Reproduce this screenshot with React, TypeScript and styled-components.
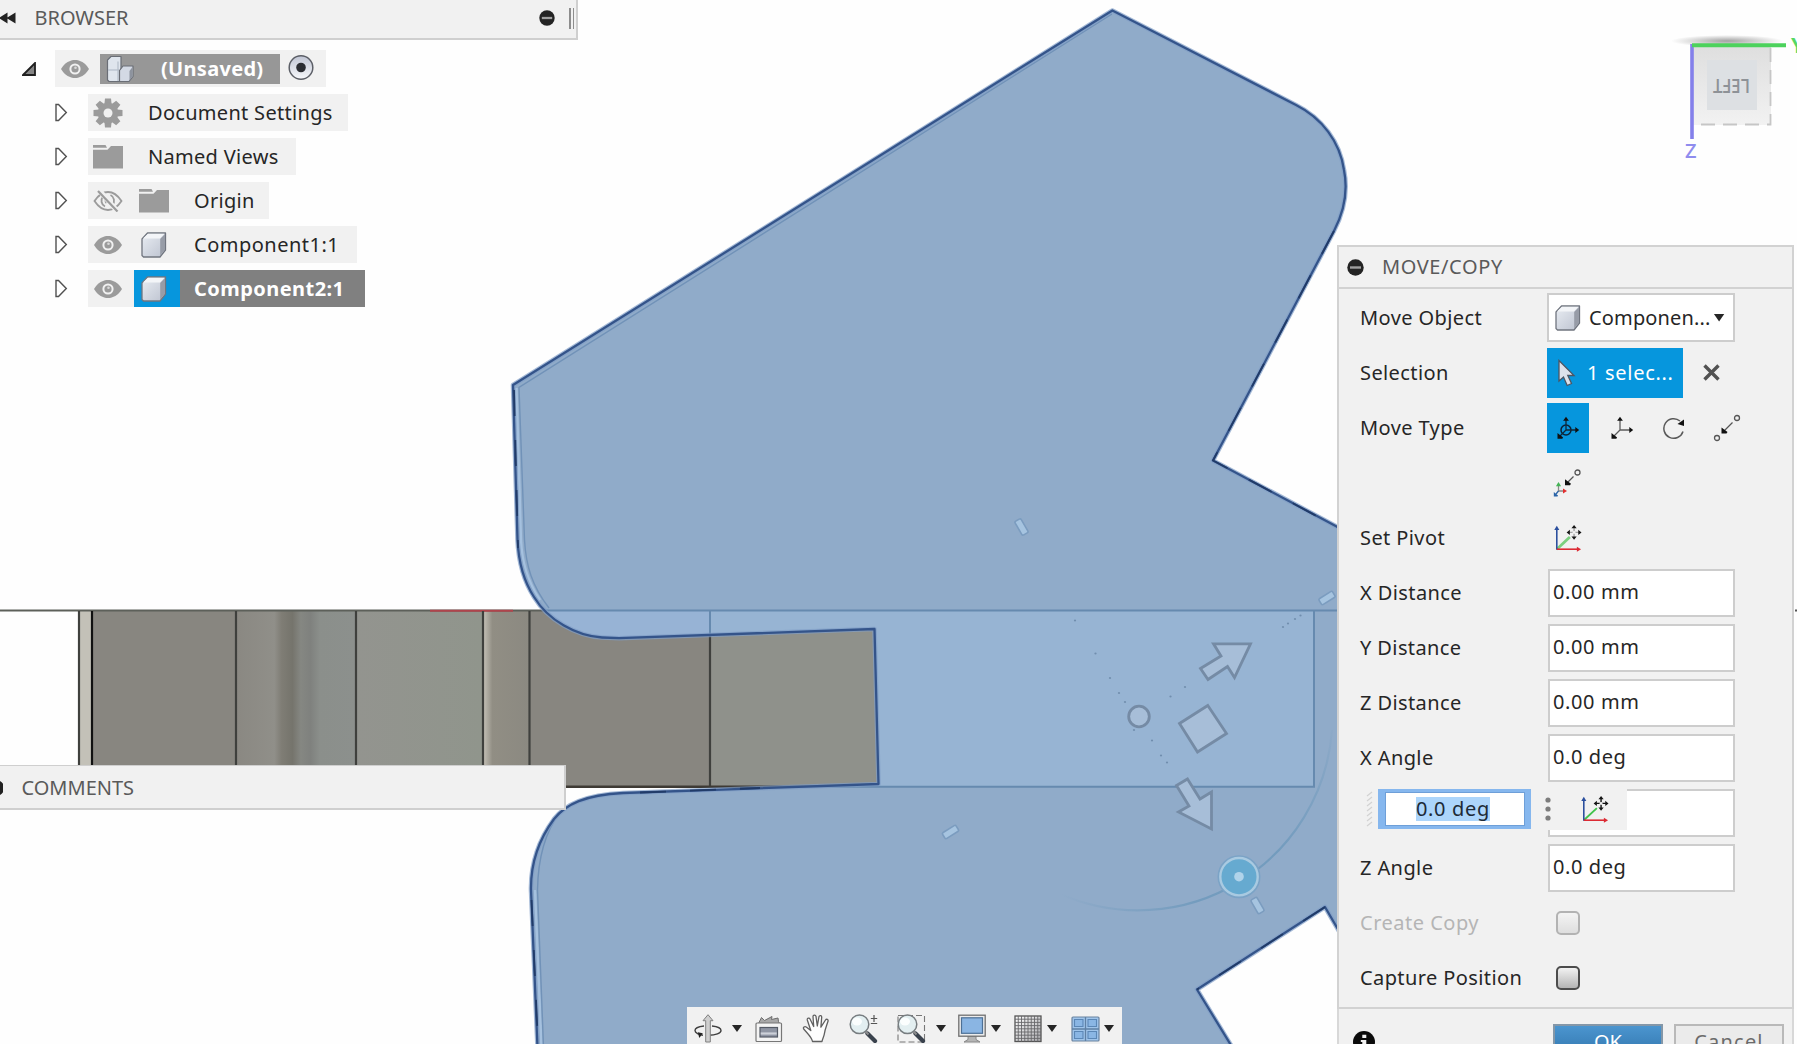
import React from 'react';
import styled, { createGlobalStyle, css } from 'styled-components';

const Global = createGlobalStyle`
  *, *::before, *::after { box-sizing: border-box; }
  html, body { margin: 0; padding: 0; overflow: hidden; background: #fefefe; }
  svg { display: block; flex: none; }
`;

const Workspace = styled.div`
  position: relative;
  width: 1797px;
  height: 1044px;
  overflow: hidden;
  background: #fefefe;
  color: #262626;
  font-family: 'Noto Sans', 'Open Sans', sans-serif;
  font-size: 20px;
  line-height: 26px;
  white-space: nowrap;
`;

const Canvas = styled.svg`
  width: 1797px;
  height: 1044px;
`;

/* Palettes float above the model canvas */
const Palette = styled.section<{ $x: number; $y: number; $w: number }>`
  position: absolute;
  left: ${p => p.$x}px;
  top: ${p => p.$y}px;
  width: ${p => p.$w}px;
`;

const Text = styled.span<{ $ls?: number; $ml?: number; $color?: string }>`
  margin-left: ${p => p.$ml ?? 0}px;
  letter-spacing: ${p => p.$ls ?? 0}px;
  ${p => p.$color && css`color: ${p.$color};`}
`;

/* ---------- browser ---------- */
const BrowserHeader = styled.header`
  display: flex;
  align-items: center;
  height: 40px;
  padding: 0 2px 2px 0;
  background: #f1f1f1;
  border-right: 2px solid #cfcfcf;
  border-bottom: 2px solid #cfcfcf;
`;
const HeaderTitle = styled.h2<{ $ml: number; $ls: number }>`
  flex: 1;
  margin: 0 0 0 ${p => p.$ml}px;
  font-size: 20px;
  font-weight: 400;
  letter-spacing: ${p => p.$ls}px;
  color: #5a5a5a;
`;
const Grip = styled.i`
  width: 5px;
  height: 21px;
  margin-left: 14px;
  border: solid #8d8d8d;
  border-width: 0 1px 0 2px;
`;
const Tree = styled.ul`
  display: grid;
  row-gap: 7px;
  margin: 0;
  padding: 10px 0 0;
  list-style: none;
`;
const TreeRow = styled.li<{ $indent: number }>`
  display: flex;
  align-items: center;
  height: 37px;
  padding-left: ${p => p.$indent}px;
`;
const Node = styled.div<{ $ml: number; $w: number }>`
  display: flex;
  align-items: center;
  width: ${p => p.$w}px;
  height: 37px;
  margin-left: ${p => p.$ml}px;
  background: #f1f1f1;
`;
const Slot = styled.span<{ $w: number; $bg?: string; $pr?: number }>`
  display: flex;
  align-items: center;
  justify-content: center;
  width: ${p => p.$w}px;
  height: 100%;
  padding-right: ${p => p.$pr ?? 0}px;
  background: ${p => p.$bg ?? 'transparent'};
`;
const NodeName = styled.span<{ $pad: number; $bg?: string; $ls?: number; $bold?: boolean }>`
  display: flex;
  flex: 1;
  align-items: center;
  height: 100%;
  padding-left: ${p => p.$pad}px;
  background: ${p => p.$bg ?? 'transparent'};
  letter-spacing: ${p => p.$ls ?? 0}px;
  color: ${p => (p.$bold ? '#fff' : '#262626')};
  font-weight: ${p => (p.$bold ? 700 : 400)};
`;
const RootBadge = styled.span`
  display: flex;
  align-items: center;
  width: 180px;
  height: 30px;
  padding-left: 6px;
  gap: 27px;
  background: #979797;
  color: #fff;
  font-weight: 700;
  letter-spacing: 0.3px;
`;

/* ---------- comments ---------- */
const CommentsBar = styled.header`
  display: flex;
  align-items: center;
  height: 45px;
  padding-top: 1px;
  background: #f1f1f1;
  border: solid #cfcfcf;
  border-width: 1px 2px 2px 0;
`;

/* ---------- move / copy dialog ---------- */
const DialogHeader = styled.header`
  display: flex;
  align-items: center;
  height: 44px;
  padding-left: 8px;
  border: 2px solid #d2d2d2;
  background: #f1f1f1;
`;
const Form = styled.div`
  display: grid;
  grid-auto-rows: 55px;
  height: 720px;
  padding: 1px 0 0 21px;
  border: solid #d2d2d2;
  border-width: 0 2px 2px 2px;
  background: #f1f1f1;
`;
const Field = styled.div<{ $off?: boolean }>`
  display: grid;
  grid-template-columns: 187px 1fr;
  align-items: center;
  color: ${p => (p.$off ? '#b5b5b5' : '#262626')};
`;
const Controls = styled.div<{ $pl?: number }>`
  display: flex;
  align-items: center;
  padding-left: ${p => p.$pl ?? 0}px;
`;
const Combo = styled.div`
  display: flex;
  align-items: center;
  width: 188px;
  height: 49px;
  padding-left: 6px;
  border: 2px solid #cdcdcd;
  background: #fff;
`;
const ValueBox = styled.div`
  display: flex;
  align-items: center;
  width: 187px;
  height: 48px;
  margin-left: 1px;
  padding: 0 0 1px 3px;
  border: 2px solid #cdcdcd;
  background: #fff;
`;
const SelectionButton = styled.div`
  display: flex;
  align-items: center;
  width: 136px;
  height: 50px;
  padding-left: 10px;
  background: #0696dd;
  color: #fff;
`;
const IconCell = styled.span<{ $on?: boolean; $w: number }>`
  display: flex;
  align-items: center;
  justify-content: center;
  width: ${p => p.$w}px;
  height: 50px;
  background: ${p => (p.$on ? '#0696dd' : 'transparent')};
`;
const Check = styled.i<{ $off?: boolean }>`
  width: 24px;
  height: 24px;
  border: 2px solid ${p => (p.$off ? '#b3b3b3' : '#4c4c4c')};
  border-radius: 5px;
  background: ${p => (p.$off ? 'linear-gradient(#f4f4f4,#dedede)' : 'linear-gradient(#f2f2f2,#b4b4b4)')};
`;
const Footer = styled.footer`
  display: flex;
  align-items: flex-start;
  height: 60px;
  padding: 15px 0 0 14px;
  border: solid #d8d8d8;
  border-width: 0 2px;
  background: #f1f1f1;
`;
const Button = styled.div<{ $primary?: boolean }>`
  display: flex;
  justify-content: center;
  width: 110px;
  height: 44px;
  padding-top: 3px;
  border: 2px solid ${p => (p.$primary ? '#8497a8' : '#b9b9b9')};
  background: ${p => (p.$primary ? 'linear-gradient(#4b95cf,#2a6ca3)' : '#ebebeb')};
  color: ${p => (p.$primary ? '#fff' : '#6b6b6b')};
`;
const FooterIcon = styled.span`
  width: 200px;
  padding-top: 7px;
`;
const FooterButtons = styled.div`
  display: flex;
  gap: 11px;
`;

/* ---------- floating angle input ---------- */
const FloatInput = styled.div`
  position: absolute;
  left: 1366px;
  top: 789px;
  display: flex;
  align-items: center;
  height: 40px;
`;
const FocusRing = styled.div`
  display: flex;
  align-items: center;
  justify-content: center;
  width: 153px;
  height: 40px;
  margin-left: 4px;
  padding-right: 4px;
  border: solid #86b7ee;
  border-width: 3px 6px 3px 7px;
  background: #fff;
  box-shadow: inset 0 0 0 1px #6e9fd8;
`;
const Selected = styled.span`
  height: 24px;
  background: #acd5fb;
  line-height: 23px;
  letter-spacing: 0.7px;
  color: #1d2a36;
`;
const FloatTools = styled.div`
  display: flex;
  align-items: center;
  width: 82px;
  height: 41px;
  margin-left: 14px;
  padding-bottom: 1px;
  gap: 30px;
  background: linear-gradient(90deg, #f1f1f1, #f1f1f1);
`;

/* ---------- navigation bar ---------- */
const NavBar = styled.nav`
  position: absolute;
  left: 687px;
  top: 1007px;
  display: flex;
  align-items: flex-start;
  width: 435px;
  height: 40px;
  padding: 7px 0 0 7px;
  background: #f1f1f1;
`;
const NavItem = styled.span<{ $ml: number }>`
  display: flex;
  align-items: center;
  width: 28px;
  height: 29px;
  margin-left: ${p => p.$ml}px;
`;
const NavArrow = styled.i<{ $ml: number }>`
  width: 10px;
  height: 7px;
  margin: 11px 0 0 ${p => p.$ml}px;
  background: #262626;
  clip-path: polygon(0 0, 100% 0, 50% 100%);
`;
const ComboArrow = styled(NavArrow)`
  margin-top: 0;
  height: 8px;
  width: 11px;
`;

/* ---------- icons ---------- */
const Minus = ({ s = 17 }: { s?: number }) => (
  <svg width={s} height={s} viewBox="0 0 17 17">
    <circle cx="8.5" cy="8.5" r="8.2" fill="#242424" />
    <rect x="3" y="7.3" width="11" height="2.4" fill="#a0a0a0" />
  </svg>
);
const Eye = () => (
  <svg width="30" height="20" viewBox="0 0 30 20">
    <path d="M1 10C5 3.5 10 1 15 1s10 2.500 14 9c-4 6.500-9 9-14 9S5 16.500 1 10z" fill="#9b9b9b" />
    <circle cx="15" cy="10" r="5.600" fill="#f1f1f1" />
    <circle cx="15" cy="10" r="3.600" fill="#9b9b9b" />
    <circle cx="15.500" cy="8.800" r="1.300" fill="#d8d8d8" />
  </svg>
);
const EyeOff = () => (
  <svg width="30" height="22" viewBox="0 0 30 22" fill="none" stroke="#9b9b9b" strokeWidth="1.800">
    <path d="M1.500 11C5.500 5 10 2 15 2s9.500 3 13.500 9c-4 6-8.500 9-13.500 9S5.500 17 1.500 11z" />
    <path d="M10 6.500a6.500 6.500 0 0 0 2 10M17.500 5a6.500 6.500 0 0 1 2 10M13.500 8.500a3 3 0 0 0 0 4.500" />
    <path d="M6 0l19 22" stroke="#f1f1f1" strokeWidth="5" />
    <path d="M5 1l19.500 20.500" strokeWidth="2.200" />
  </svg>
);
const Gear = () => (
  <svg width="30" height="30" viewBox="-15 -15 30 30">
    {[0, 45, 90, 135].map(a => (
      <path key={a} d="M-3.600-9L-3-14.500H3L3.600-9V9L3 14.500H-3L-3.600 9z" fill="#9b9b9b" transform={`rotate(${a})`} />
    ))}
    <circle r="10.300" fill="#9b9b9b" />
    <circle r="4.500" fill="#f1f1f1" />
  </svg>
);
const Folder = () => (
  <svg width="30" height="25" viewBox="0 0 30 25" fill="#9b9b9b">
    <path d="M0 1h12.500l1.500 2.800H0z" />
    <path d="M0 5.800h14.500L18 2H30v22.500H0z" />
  </svg>
);
const Cube = () => (
  <svg width="26" height="26" viewBox="0 0 26 26">
    <defs>
      <linearGradient id="cubeFace" x1="0" y1="0" x2="1" y2="1">
        <stop offset="0" stopColor="#e9edf3" />
        <stop offset="1" stopColor="#bcc2cf" />
      </linearGradient>
    </defs>
    <path d="M1 7L6.500 1h18v17L19 25H2.500L1 23.500z" fill="url(#cubeFace)" stroke="#70757f" strokeWidth="1.300" strokeLinejoin="round" />
    <path d="M2 6.500L7 1.800h16.500L19 6.500z" fill="#f3f5f8" />
    <path d="M19.200 7l4.800-5v15.500l-4.800 6z" fill="#979ca7" />
  </svg>
);
const Assembly = () => (
  <svg width="28" height="28" viewBox="0 0 28 28" stroke="#6a6e76" strokeWidth="1.200" strokeLinejoin="round">
    <path d="M1.500 5L5 1.500h10V26.500H3L1.500 25z" fill="#dfe5ed" />
    <path d="M2 15h11" fill="none" stroke="#b4bcc9" />
    <path d="M12 6.500V26" fill="none" stroke="#b4bcc9" />
    <path d="M13.500 15.500L17 11h10v10.500L23 26.500H13.500z" fill="#d3d9e4" />
    <path d="M23.500 16L26.500 12v9.500l-3 4z" fill="#8d939e" stroke="none" />
  </svg>
);
const RadioDot = () => (
  <svg width="26" height="29" viewBox="0 0 26 29">
    <defs>
      <linearGradient id="radioFill" x1="0" y1="0" x2="0" y2="1">
        <stop offset="0" stopColor="#c0c5d4" />
        <stop offset="1" stopColor="#f7f8fb" />
      </linearGradient>
    </defs>
    <circle cx="13" cy="13.500" r="11.800" fill="url(#radioFill)" stroke="#5c5f67" strokeWidth="1.500" />
    <circle cx="13" cy="13.500" r="4.800" fill="#2b2d33" />
  </svg>
);
const Collapsed = () => (
  <svg width="13" height="19" viewBox="0 0 13 19">
    <path d="M1 1.500h2.500L11.300 9.500 3.500 17.500H1z" fill="#fff" stroke="#515151" strokeWidth="1.400" />
  </svg>
);
const Expanded = () => (
  <svg width="14" height="14" viewBox="0 0 14 14">
    <path d="M1 13L13 1v12z" fill="#858585" stroke="#202020" strokeWidth="1.800" />
  </svg>
);
const Rewind = () => (
  <svg width="16" height="12" viewBox="0 0 16 12" fill="#222">
    <path d="M-1 6L7.500.5v11zM6.500 6L15.500.5v11z" />
  </svg>
);
const Cursor = () => (
  <svg width="20" height="28" viewBox="0 0 20 28">
    <path d="M2 1.500V22l4.500-4 3.700 8.500 4.300-2L10.800 16.500H17z" fill="#dde1ea" stroke="#4d5563" strokeWidth="1.300" />
  </svg>
);
const Clear = () => (
  <svg width="17" height="17" viewBox="0 0 17 17" stroke="#525252" strokeWidth="3.400">
    <path d="M1.500 1.500l14 14M15.500 1.500l-14 14" />
  </svg>
);
const Triad = ({ ring }: { ring?: boolean }) => (
  <svg width="24" height="24" viewBox="0 0 24 24">
    {ring && <circle cx="10" cy="14" r="5" fill="none" stroke="#0b2337" strokeWidth="1.500" />}
    <path d="M10 3v11h10M10 14l-6 6" fill="none" stroke={ring ? '#10283a' : '#5c5c5c'} strokeWidth="1.300" />
    <path d="M10 .800l2.900 3.900H7.100zM23.200 14L19.300 11.100v5.800zM1.500 22.800V17l5.600 4.500-.800 1.300z" fill="#111" />
  </svg>
);
const Rotate = () => (
  <svg width="24" height="24" viewBox="0 0 24 24">
    <path d="M18 5A9.800 9.800 0 1 0 21 15.500" fill="none" stroke="#5a5a5a" strokeWidth="1.500" />
    <path d="M22 3.500v6.500L15.500 8z" fill="#111" />
  </svg>
);
const PointToPoint = () => (
  <svg width="28" height="28" viewBox="0 0 28 28">
    <circle cx="24" cy="4" r="2.500" fill="none" stroke="#555" strokeWidth="1.300" />
    <circle cx="4" cy="24" r="2.500" fill="none" stroke="#555" strokeWidth="1.300" />
    <path d="M19.500 8.500L11 17" stroke="#555" strokeWidth="1.300" />
    <path d="M8.500 19.500V13.500l6 4.500-1 1.500z" fill="#111" />
  </svg>
);
const PointToPosition = () => (
  <svg width="28" height="28" viewBox="0 0 28 28">
    <circle cx="24.500" cy="3.500" r="2.500" fill="none" stroke="#555" strokeWidth="1.300" />
    <path d="M20.500 7.500L14 14" stroke="#555" strokeWidth="1.300" />
    <path d="M12 16.300V10.300l6 4.500-1 1.500z" fill="#111" />
    <path d="M5.500 15v7H10" fill="none" stroke="#888" strokeWidth="1.300" />
    <path d="M5.500 13l2.600 4.200H2.900z" fill="#43b455" />
    <path d="M14 22l-4-2.400v4.800z" fill="#e22e2e" />
    <path d="M5.500 22L3 25" stroke="#2a64a8" strokeWidth="1.300" />
    <path d="M.800 27.500v-4.500l4.200 3.500-.500 1z" fill="#2a64a8" />
  </svg>
);
const Pivot = ({ strong }: { strong?: boolean }) => (
  <svg width="28" height="28" viewBox="0 0 30 30">
    <path d="M3 27L17 14" stroke={strong ? '#41c34b' : '#7bd07f'} strokeWidth={strong ? 2 : 3} />
    <path d="M3 27.500V5" stroke="#2b4f9e" strokeWidth="1.700" />
    <path d="M3 2l2.700 4.500H.3z" fill="#2b4f9e" />
    <path d="M3 27h22" stroke="#dc2a33" strokeWidth="1.700" />
    <path d="M29 27l-4.500-2.700v5.400z" fill="#dc2a33" />
    <path d="M21.500 3v12M15.500 9h12" stroke={strong ? '#111' : '#a5a5a5'} strokeWidth="1.500" />
    <path d="M21.500 1l2.800 3.500h-5.600zM21.500 17l2.800-3.500h-5.600zM13.500 9l3.500-2.800v5.600zM29.500 9l-3.500-2.800v5.600z" fill="#161616" />
    <circle cx="21.500" cy="9" r="1.600" fill="#f1f1f1" />
  </svg>
);
const GripDots = () => (
  <svg width="8" height="38" viewBox="0 0 8 38" stroke="#d2d2d2" strokeWidth="1.300">
    {[2, 7, 12, 17, 22, 27, 32].map(y => <path key={y} d={`M1 ${y + 4}l5-4`} />)}
  </svg>
);
const MoreDots = () => (
  <svg width="6" height="26" viewBox="0 0 6 26" fill="#7d7d7d">
    <circle cx="3" cy="4" r="2.600" /><circle cx="3" cy="13" r="2.600" /><circle cx="3" cy="22" r="2.600" />
  </svg>
);
const Info = () => (
  <svg width="22" height="22" viewBox="0 0 22 22">
    <circle cx="11" cy="11" r="11" fill="#0b0b0b" />
    <path d="M9.300 3.800h4v3.200h-4zM7.800 9h5.500v8h1.500v1.800H7.500V17h1.800v-6H7.800z" fill="#f1f1f1" />
  </svg>
);
const Orbit = () => (
  <svg width="28" height="29" viewBox="0 0 28 29">
    <path d="M10 12c-6 .600-9 2.400-9 4.600 0 2.400 4 4.200 8 4.600M18 12c5.500.600 9 2.200 9 4.400 0 2.600-5.500 4.800-12 4.800" fill="none" stroke="#3f3f3f" strokeWidth="1.400" />
    <path d="M14 .700l5 6h-2.700V28h-4.600V6.700H9z" fill="#cfcfcf" stroke="#808080" strokeWidth="1" />
    <path d="M3.800 18.200l5 1-3.500 4.800z" fill="#222" />
  </svg>
);
const LookAt = () => (
  <svg width="28" height="29" viewBox="0 0 28 29">
    <path d="M3.500 9.500L6.500 3.500l3 3L17 2.500l-.500 3 6.500-1.500.500 3.500 1 2z" fill="#a8a8a8" stroke="#6c6c6c" strokeWidth="1" />
    <rect x="1" y="9" width="25.500" height="18.500" rx="1" fill="#f4f4f4" stroke="#777" strokeWidth="1.200" />
    <rect x="5" y="13.500" width="17.500" height="9.500" fill="#8f95a3" stroke="#555b66" strokeWidth="1.200" />
    <path d="M5.700 19.500h16" stroke="#cdd1d9" strokeWidth="2.200" />
  </svg>
);
const Hand = () => (
  <svg width="29" height="29" viewBox="0 0 29 29">
    <path d="M10.500 27.500c-.500-4-4.500-7.500-8.800-12.500-1-1.500 1-3 2.500-2l4.600 3.500L5.300 6c-.400-1.800 1.900-2.600 2.700-1l3.700 7.500L11 2.500c0-1.800 2.600-2 3-.200l1.300 9.700L17 2.700c.400-1.700 2.800-1.400 2.700.400l-.800 10L23.500 6c1-1.500 3-.500 2.500 1.200-1.200 4-3 8-3.500 12-.400 3.300-2 5.300-2.500 8.300z" fill="#fdfdfd" stroke="#606060" strokeWidth="1.300" strokeLinejoin="round" />
  </svg>
);
const Lens = () => (
  <>
    <path d="M18.500 19.500l7.500 7.500" stroke="#3a424d" strokeWidth="4.300" strokeLinecap="round" />
    <path d="M16 17l3.500 3.500" stroke="#8d8d8d" strokeWidth="2" />
    <circle cx="10.500" cy="10.300" r="9.300" fill="#e3eff1" stroke="#777d80" strokeWidth="1.500" />
    <ellipse cx="8" cy="7.500" rx="5" ry="4" fill="#fbfefe" />
  </>
);
const Zoom = () => (
  <svg width="29" height="29" viewBox="0 0 29 29">
    <Lens />
    <path d="M25 1v7M21.800 4.500h6.400M21.800 9.500h6.400" stroke="#555" strokeWidth="1.200" />
  </svg>
);
const ZoomWindow = () => (
  <svg width="29" height="29" viewBox="0 0 29 29">
    <rect x="1" y="1.500" width="26.500" height="26.500" fill="none" stroke="#777" strokeWidth="1.100" strokeDasharray="6 3" />
    <Lens />
  </svg>
);
const Monitor = () => (
  <svg width="28" height="29" viewBox="0 0 28 29">
    <path d="M10 22h8v3.500l4 2.500H6l4-2.500z" fill="#b5b5b5" stroke="#888" />
    <rect x=".8" y="1.200" width="26.400" height="21" fill="#ececec" stroke="#707070" strokeWidth="1.300" />
    <rect x="3.500" y="3.800" width="21" height="15.500" fill="#8ab5e3" stroke="#4d7096" strokeWidth="1.200" />
  </svg>
);
const GridIcon = () => (
  <svg width="28" height="29" viewBox="0 0 28 29">
    <defs>
      <linearGradient id="gridFill" x1="0" y1="0" x2="1" y2="1">
        <stop offset="0" stopColor="#fff" />
        <stop offset="1" stopColor="#a8a8ac" />
      </linearGradient>
    </defs>
    <rect x="1" y="2" width="26" height="25.500" fill="url(#gridFill)" stroke="#555" strokeWidth="1.300" />
    {[1, 2, 3, 4, 5, 6, 7].map(i => (
      <path key={i} d={`M${1 + i * 3.25} 2v25.500M1 ${2 + i * 3.2}h26`} stroke="#66666a" strokeWidth=".9" />
    ))}
  </svg>
);
const Viewports = () => (
  <svg width="29" height="29" viewBox="0 0 29 29">
    <rect x="1" y="3" width="27" height="24" rx="1" fill="#9fc4ea" stroke="#6a83a0" strokeWidth="1.200" />
    <path d="M14.500 3v24M1 15h27" stroke="#5f80a4" strokeWidth="1.300" />
    <path d="M3.500 5.500h8.500v7H3.500zM17 5.500h8.500v7H17zM3.500 17.500h8.500v7H3.500zM17 17.500h8.500v7H17z" fill="#8ab6e4" stroke="#5b87b6" strokeWidth="1.100" />
  </svg>
);

/* ---------- model view ---------- */
const BODY =
  'M1360 610V539L1213 460.500L1334 231Q1350 200 1344 170C1340 142 1322 118 1296 105L1112.400 10.500L513 385L517.500 540C518.500 562 523 580 534 597C548 620 576 636 602 637.500L619 638.200L874.500 629L878.500 784L623 793C585 795 566 804 554 819C540 838 530.500 862 531 890L538 1060H1240L1197 989.500L1325 907L1350 950H1360z';
const edges = [79, 92, 236, 356, 483, 529.5, 710];
const handles: [number, number, number][] = [
  [1021.5, 527, -30], [950.5, 832, 58], [1327, 598, 58], [1257.5, 905.5, -30],
];
const specks: [number, number][] = [
  [1075, 620.5], [1095.5, 653.5], [1110, 678], [1119, 693], [1125, 702],
  [1170.5, 696.5], [1185, 687], [1152, 740.5], [1161, 755.5], [1167, 762.5],
  [1288, 623.5], [1300.5, 615.5], [1295, 619], [1283, 627], [1134, 730],
];

const Model = () => (
  <Canvas viewBox="0 0 1797 1044">
    <defs>
      <linearGradient id="bore" x1="0" x2="1" y1="0" y2="0">
        <stop offset="0" stopColor="#8a8882" /><stop offset=".32" stopColor="#908f89" />
        <stop offset=".38" stopColor="#7f7d75" /><stop offset=".47" stopColor="#75746c" />
        <stop offset=".54" stopColor="#858782" /><stop offset=".62" stopColor="#7f817e" />
        <stop offset=".70" stopColor="#8b8f8b" /><stop offset="1" stopColor="#8c908d" />
      </linearGradient>
      <linearGradient id="flat" x1="0" x2="1" y1="0" y2="0">
        <stop offset="0" stopColor="#93948f" /><stop offset="1" stopColor="#90958c" />
      </linearGradient>
      <linearGradient id="rim" x1="0" x2="1" y1="0" y2="0">
        <stop offset="0" stopColor="#c6c2b8" /><stop offset=".2" stopColor="#918e84" /><stop offset="1" stopColor="#8b8981" />
      </linearGradient>
      <linearGradient id="arcFade" gradientUnits="userSpaceOnUse" x1="1060" x2="1200" y1="0" y2="0">
        <stop offset="0" stopColor="#6c98bb" stopOpacity="0" /><stop offset="1" stopColor="#6c98bb" />
      </linearGradient>
      <linearGradient id="arcTail" gradientUnits="userSpaceOnUse" x1="0" x2="0" y1="730" y2="850">
        <stop offset="0" stopColor="#6c98bb" stopOpacity=".1" /><stop offset="1" stopColor="#6c98bb" />
      </linearGradient>
      <radialGradient id="cubeShadow">
        <stop offset="0" stopColor="#a2a2a2" /><stop offset="1" stopColor="#a2a2a2" stopOpacity="0" />
      </radialGradient>
      <linearGradient id="cubeSide" x1="0" x2="0" y1="0" y2="1">
        <stop offset="0" stopColor="#dedede" /><stop offset="1" stopColor="#f2f2f2" />
      </linearGradient>
      <clipPath id="bodyClip"><path d={BODY} /></clipPath>
    </defs>

    <rect x="79" y="610" width="13" height="177" fill="#c3c1b8" />
    <rect x="92" y="610" width="144" height="177" fill="#888680" />
    <rect x="236" y="610" width="120" height="177" fill="url(#bore)" />
    <rect x="356" y="610" width="127" height="177" fill="url(#flat)" />
    <rect x="483" y="610" width="47" height="177" fill="url(#rim)" />
    <rect x="530" y="610" width="180" height="177" fill="#888680" />
    <rect x="710" y="610" width="175" height="177" fill="#8f918b" />
    <path d="M0 610.500H600" stroke="#5d605a" strokeWidth="2" />
    <path d="M430 610.700H513" stroke="#b0444c" strokeWidth="2" />
    {edges.map(x => (
      <path key={x} d={`M${x} 611V787`} stroke={x === 92 ? '#111' : '#3f403d'} strokeWidth="2.2" />
    ))}
    <path d="M540 786.700H880" stroke="#3e3a34" strokeWidth="2.400" />
    <path d="M1795 610.500h2" stroke="#555" strokeWidth="2" />

    <path d={BODY} fill="#90abc9" />
    <g clipPath="url(#bodyClip)">
      <rect x="530" y="610.500" width="184" height="176" fill="#97b3d5" />
      <rect x="710" y="610.500" width="604" height="176" fill="#97b4d3" />
      <path d="M500 610.500H1340M1314 610.500V786.700H700M710 610V650" fill="none" stroke="#668aaf" strokeWidth="2" />
      <path d="M516.500 388L521 540C522 562 527 580 540 600M535 890L542 1060" fill="none" stroke="#a5c1df" strokeWidth="2.400" />
      <path d="M1112 14L519 387.500L524.500 540C526 566 532 586 549 608M560 812C545 832 538 860 537.500 890L544 1060" fill="none" stroke="#7192b8" strokeWidth="1.400" />
    </g>
    <path d={BODY} fill="none" stroke="#7f9cc6" strokeWidth="4.600" strokeLinejoin="round" opacity=".7" />
    <path d={BODY} fill="none" stroke="#34548a" strokeWidth="2.300" strokeLinejoin="round" />
    <path d="M514 390L518 548M531.500 900L538 1044M640 792.500L760 788M1334 231L1213 460.500L1337 527M1325 907L1197 989.500" fill="none" stroke="#213b68" strokeWidth="1.800" strokeDasharray="26 24" />

    <path d="M1058 893A194 194 0 0 0 1239 882" fill="none" stroke="url(#arcFade)" strokeWidth="2.200" opacity=".8" />
    <path d="M1239 882A194 194 0 0 0 1332 730" fill="none" stroke="url(#arcTail)" strokeWidth="2.200" opacity=".8" />
    {specks.map(([x, y]) => <circle key={`${x}-${y}`} cx={x} cy={y} r="1.1" fill="#6482a2" opacity=".75" />)}
    <g fill="#a7bed8" stroke="#758ba5" strokeWidth="2.800">
      <path d="M1213.500 643.800H1250.500L1234.500 677.500L1227.500 666.500L1208 679.500L1200.500 668.500L1221 656z" />
      <path d="M1207.800 705.500L1226.500 733.500L1197.500 752L1179.500 723.500z" />
      <path d="M1187.500 779L1200 799L1211.500 792V829L1178.500 812L1189 806L1176.500 785.500z" />
      <circle cx="1139" cy="716.500" r="10.300" />
    </g>
    {handles.map(([x, y, a]) => (
      <rect key={x} x={x - 3.5} y={y - 8} width="7" height="16" rx="1.5" fill="#a6c4e0" stroke="#7b9cbf" strokeWidth="1.6" transform={`rotate(${a} ${x} ${y})`} />
    ))}
    <circle cx="1239" cy="876.700" r="20" fill="#66aad0" stroke="#7ba3c6" strokeWidth="3" />
    <circle cx="1239" cy="876.700" r="18.700" fill="none" stroke="#a9cae1" strokeWidth="2.400" />
    <circle cx="1239" cy="876.700" r="4.800" fill="#b0d3ea" />

    <ellipse cx="1727" cy="41" rx="56" ry="6" fill="url(#cubeShadow)" />
    <rect x="1692" y="45" width="79" height="80" fill="url(#cubeSide)" />
    <path d="M1770.500 48V124.500H1694" fill="none" stroke="#c6c6c6" strokeWidth="1.800" strokeDasharray="14 8" />
    <rect x="1707" y="60" width="50" height="50" fill="#dde0e3" />
    <text x="1731.500" y="80" textAnchor="middle" fontFamily="'Open Sans', sans-serif" fontSize="20" fontWeight="600" textLength="37" lengthAdjust="spacingAndGlyphs" fill="#8e9297" transform="rotate(180 1731.500 79.500)">LEFT</text>
    <path d="M1692 44V139" stroke="#8480ea" strokeWidth="3.600" />
    <path d="M1692 45.300H1786" stroke="#4cd25c" strokeWidth="4" />
    <text x="1685" y="157.500" fontFamily="'Open Sans', sans-serif" fontSize="20" fontWeight="600" fill="#8f8cee">Z</text>
    <text x="1791" y="53" fontFamily="'Open Sans', sans-serif" fontSize="21" fontWeight="700" fill="#55d864">Y</text>
  </Canvas>
);

const values: [string, string][] = [
  ['X Distance', '0.00 mm'], ['Y Distance', '0.00 mm'], ['Z Distance', '0.00 mm'],
  ['X Angle', '0.0 deg'], ['', ''], ['Z Angle', '0.0 deg'],
];
const LS = 0.4;

export default function App() {
  return (
    <Workspace>
      <Global />
      <Model />

      <Palette $x={0} $y={0} $w={578}>
        <BrowserHeader>
          <Rewind />
          <HeaderTitle $ml={18.5} $ls={0}>BROWSER</HeaderTitle>
          <Minus s={16} />
          <Grip />
        </BrowserHeader>
        <Tree>
          <TreeRow $indent={22}>
            <Expanded />
            <Node $ml={19} $w={271}>
              <Slot $w={45} $pr={6}><Eye /></Slot>
              <RootBadge><Assembly />(Unsaved)</RootBadge>
              <Slot $w={41}><RadioDot /></Slot>
            </Node>
          </TreeRow>
          <TreeRow $indent={55}>
            <Collapsed />
            <Node $ml={20} $w={260}><Slot $w={40}><Gear /></Slot><NodeName $pad={20} $ls={0.3}>Document Settings</NodeName></Node>
          </TreeRow>
          <TreeRow $indent={55}>
            <Collapsed />
            <Node $ml={20} $w={208}><Slot $w={40}><Folder /></Slot><NodeName $pad={20} $ls={0.3}>Named Views</NodeName></Node>
          </TreeRow>
          <TreeRow $indent={55}>
            <Collapsed />
            <Node $ml={20} $w={181}><Slot $w={40}><EyeOff /></Slot><Slot $w={52}><Folder /></Slot><NodeName $pad={14} $ls={0.3}>Origin</NodeName></Node>
          </TreeRow>
          <TreeRow $indent={55}>
            <Collapsed />
            <Node $ml={20} $w={269}><Slot $w={40}><Eye /></Slot><Slot $w={52}><Cube /></Slot><NodeName $pad={14} $ls={0.5}>Component1:1</NodeName></Node>
          </TreeRow>
          <TreeRow $indent={55}>
            <Collapsed />
            <Node $ml={20} $w={277}><Slot $w={40}><Eye /></Slot><Slot $w={6} /><Slot $w={46} $pr={6} $bg="#0696dd"><Cube /></Slot><NodeName $pad={14} $bg="#808080" $bold $ls={0.45}>Component2:1</NodeName></Node>
          </TreeRow>
        </Tree>
      </Palette>

      <Palette $x={0} $y={765} $w={566}>
        <CommentsBar>
          <svg width="3" height="16" viewBox="0 0 3 16"><path d="M0 1a8 8 0 0 1 0 14z" fill="#222" /></svg>
          <HeaderTitle $ml={18.5} $ls={0}>COMMENTS</HeaderTitle>
        </CommentsBar>
      </Palette>

      <Palette $x={1337} $y={245} $w={457}>
        <DialogHeader>
          <Minus />
          <HeaderTitle $ml={18} $ls={0.6}>MOVE/COPY</HeaderTitle>
        </DialogHeader>
        <Form>
          <Field>
            <Text $ls={LS}>Move Object</Text>
            <Controls><Combo><Cube /><Text $ls={0.15} $ml={8}>Componen...</Text><ComboArrow $ml={3} /></Combo></Controls>
          </Field>
          <Field>
            <Text $ls={LS}>Selection</Text>
            <Controls><SelectionButton><Cursor /><Text $ls={0.7} $ml={10}>1 selec...</Text></SelectionButton><IconCell $w={56}><Clear /></IconCell></Controls>
          </Field>
          <Field>
            <Text $ls={LS}>Move Type</Text>
            <Controls>
              <IconCell $on $w={42}><Triad ring /></IconCell>
              <IconCell $w={66}><Triad /></IconCell>
              <IconCell $w={38}><Rotate /></IconCell>
              <IconCell $w={68}><PointToPoint /></IconCell>
            </Controls>
          </Field>
          <Field><span /><Controls $pl={6}><PointToPosition /></Controls></Field>
          <Field><Text $ls={LS}>Set Pivot</Text><Controls $pl={7}><Pivot /></Controls></Field>
          {values.map(([label, value], i) => (
            <Field key={i}>
              <Text $ls={LS}>{label}</Text>
              <Controls><ValueBox><Text $ls={0.6}>{value}</Text></ValueBox></Controls>
            </Field>
          ))}
          <Field $off><Text $ls={0.5}>Create Copy</Text><Controls $pl={9}><Check $off /></Controls></Field>
          <Field><Text $ls={LS}>Capture Position</Text><Controls $pl={9}><Check /></Controls></Field>
        </Form>
        <Footer>
          <FooterIcon><Info /></FooterIcon>
          <FooterButtons>
            <Button $primary><Text>OK</Text></Button>
            <Button><Text $ls={1.2}>Cancel</Text></Button>
          </FooterButtons>
        </Footer>
      </Palette>

      <FloatInput>
        <GripDots />
        <FocusRing><Selected>0.0 deg</Selected></FocusRing>
        <FloatTools><MoreDots /><Pivot strong /></FloatTools>
      </FloatInput>

      <NavBar>
        <NavItem $ml={0}><Orbit /></NavItem><NavArrow $ml={10} />
        <NavItem $ml={13}><LookAt /></NavItem>
        <NavItem $ml={19}><Hand /></NavItem>
        <NavItem $ml={19}><Zoom /></NavItem>
        <NavItem $ml={20}><ZoomWindow /></NavItem><NavArrow $ml={11} />
        <NavItem $ml={12}><Monitor /></NavItem><NavArrow $ml={5} />
        <NavItem $ml={13}><GridIcon /></NavItem><NavArrow $ml={5} />
        <NavItem $ml={14}><Viewports /></NavItem><NavArrow $ml={5} />
      </NavBar>
    </Workspace>
  );
}
